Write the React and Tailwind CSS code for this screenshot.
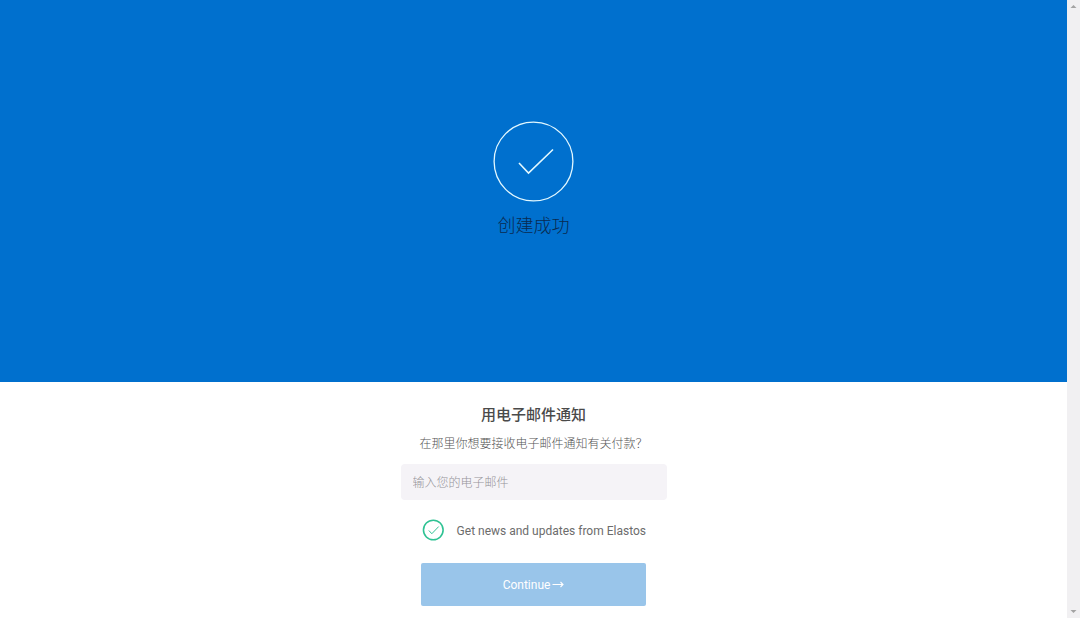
import React, { useState } from "react";

function ScrollTrack() {
  return (
    <div aria-hidden="true" className="flex w-[13px] shrink-0 flex-col items-center justify-between bg-[#f1f0f2] py-1">
      <svg width="7" height="5" viewBox="0 0 7 5">
        <path d="M3.5 1 L6.5 4 H0.5 Z" fill="#a3a3a3" />
      </svg>
      <svg width="7" height="5" viewBox="0 0 7 5">
        <path d="M3.5 4 L6.5 1 H0.5 Z" fill="#a3a3a3" />
      </svg>
    </div>
  );
}

function SuccessBanner() {
  return (
    <header className="flex flex-col items-center bg-[#0070ce] pt-[121px] pb-[142px]">
      <svg width="81" height="81" viewBox="0 0 81 81" fill="none" stroke="#e2f8ff" aria-hidden="true">
        <circle cx="40.5" cy="40.5" r="39.4" strokeWidth="1.3" />
        <path d="M26 42 L35.5 52 L60 28.5" strokeWidth="1.6" />
      </svg>
      <h1 className="mt-2.5 text-lg leading-7 font-light text-[#0a2a50]">创建成功</h1>
    </header>
  );
}

function NotifyForm() {
  const [news, setNews] = useState(true);
  return (
    <form className="flex flex-col items-center pt-[21px] pb-3" onSubmit={(e) => e.preventDefault()}>
      <h2 className="text-[15px] leading-6 font-medium text-[#4a4a4a]">用电子邮件通知</h2>
      <label htmlFor="email" className="mt-[7px] text-xs leading-5 font-light text-[#555555]">
        在那里你想要接收电子邮件通知有关付款？
      </label>
      <input
        id="email"
        type="email"
        placeholder="输入您的电子邮件"
        className="mt-2.5 h-9 w-[266px] rounded-sm bg-[#f5f3f7] px-3 pt-0.5 text-xs font-light text-[#4a4a4a] outline-none placeholder:text-[#969399]"
      />
      <label className="mt-[18px] flex w-[225px] items-center">
        <input
          type="checkbox"
          checked={news}
          onChange={(e) => setNews(e.target.checked)}
          className="peer sr-only"
        />
        <svg width="24" height="24" viewBox="0 0 24 24" fill="none" stroke="#2fc293" aria-hidden="true">
          <circle cx="12.5" cy="12" r="10" strokeWidth="1.6" />
          {news && <path d="M8 12.5 L11 15.8 L18 8.5" strokeWidth="1" />}
        </svg>
        <span className="ml-3 pt-0.5 text-xs whitespace-nowrap text-[#6c6c6c]">Get news and updates from Elastos</span>
      </label>
      <button type="submit" className="mt-[21px] flex h-[43px] w-[225px] items-center justify-center gap-0.5 rounded-xs bg-[#99c5ea] text-xs text-white">
        Continue
        <svg width="12" height="8" viewBox="0 0 12 8" fill="none" stroke="currentColor" aria-hidden="true">
          <path d="M0.5 3.5 H11 M8.5 1 L11 3.5 L8.5 6" strokeWidth="1.1" />
        </svg>
      </button>
    </form>
  );
}

export default function App() {
  return (
    <div className="flex min-h-screen bg-white font-[Roboto,'Noto_Sans_CJK_SC',sans-serif]">
      <main className="min-w-0 flex-1">
        <SuccessBanner />
        <NotifyForm />
      </main>
      <ScrollTrack />
    </div>
  );
}
